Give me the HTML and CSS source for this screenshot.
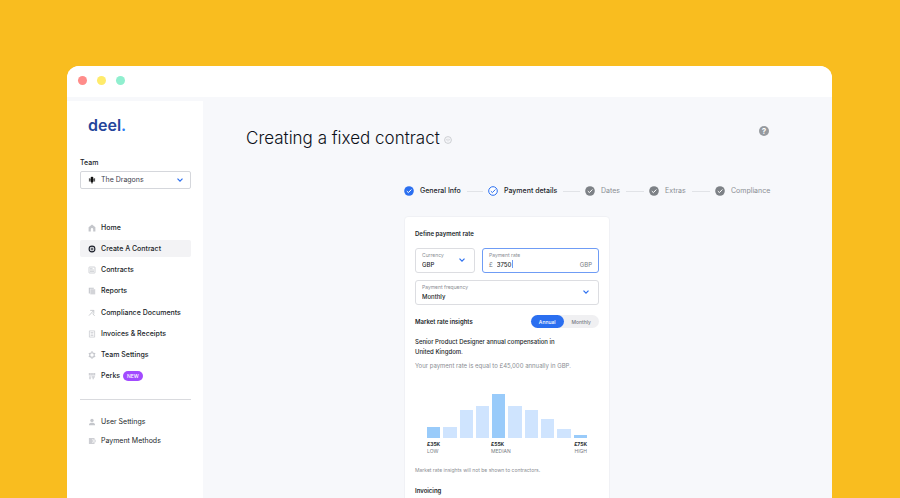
FILE: index.html
```html
<!DOCTYPE html>
<html lang="en">
<head>
<meta charset="utf-8">
<meta name="viewport" content="width=device-width, initial-scale=1">
<title>Deel – Creating a fixed contract</title>
<link rel="stylesheet" href="styles.css">
</head>
<body>
<svg class="sprite" aria-hidden="true">
  <symbol id="chevron" viewBox="0 0 8 8"><path d="M1.5 2.7 4 5.2l2.5-2.5" fill="none" stroke="currentColor" stroke-width="1.2"/></symbol>
  <symbol id="check-solid" viewBox="0 0 10 10"><circle cx="5" cy="5" r="4.8" fill="currentColor"/><path d="m2.8 5.1 1.6 1.5L7.4 3.5" fill="none" stroke="#fff" stroke-width="1"/></symbol>
  <symbol id="check-ring" viewBox="0 0 10 10"><circle cx="5" cy="5" r="4.3" fill="#fff" stroke="currentColor"/><path d="m2.8 5.1 1.6 1.5L7.4 3.5" fill="none" stroke="currentColor" stroke-width="1"/></symbol>
</svg>
<div class="window">
  <header class="titlebar">
    <span class="dot dot-red"></span><span class="dot dot-yellow"></span><span class="dot dot-green"></span>
  </header>
  <div class="app">
    <aside class="sidebar">
      <a class="logo" href="#">deel<span>.</span></a>
      <label class="team-label" for="team">Team</label>
      <div class="team-box">
        <svg class="icon team-icon" viewBox="0 0 8 8"><rect x="2.6" y=".8" width="2.8" height="5.8" rx="1.3"/><path d="M1.4 2.2v3.4M6.6 2.2v3.4M1.4 3.9h5.2M4 6v1.8" fill="none" stroke="currentColor" stroke-width=".7"/></svg>
        <select id="team"><option>The Dragons</option></select>
        <svg class="icon chevron"><use href="#chevron"/></svg>
      </div>
      <nav>
        <ul class="menu">
          <li><a href="#"><svg class="icon" viewBox="0 0 8 8"><path d="M.6 3.2 4 .5l3.4 2.7v4.2H5.2V5.2a1.2 1.2 0 0 0-2.4 0v2.2H.6z"/></svg>Home</a></li>
          <li><a class="active" href="#"><svg class="icon" viewBox="0 0 8 8"><circle cx="4" cy="4" r="2.9" fill="none" stroke="currentColor" stroke-width="1.1"/><path d="M4 2.5v3M2.5 4h3" stroke="currentColor" stroke-width=".8"/></svg>Create A Contract</a></li>
          <li><a href="#"><svg class="icon" viewBox="0 0 8 8"><rect x="1" y="1" width="6" height="6" rx=".5" fill="none" stroke="currentColor" stroke-width=".8"/><path d="M2 2.7h2.6M2 4h4M2 5.4h4" stroke="currentColor" stroke-width=".8"/></svg>Contracts</a></li>
          <li><a href="#"><svg class="icon" viewBox="0 0 8 8"><path d="M.8.8h5v1H1.9v4.7H.8z"/><path d="M2.3 2.2h4.9v5.2H2.3z" opacity=".75"/></svg>Reports</a></li>
          <li><a href="#"><svg class="icon" viewBox="0 0 8 8"><path d="M2.2 1.4h3.6v3.4M5.8 1.4 1 6.6M4.6 4.6l2 2.2" fill="none" stroke="currentColor" stroke-width=".9"/></svg>Compliance Documents</a></li>
          <li><a href="#"><svg class="icon" viewBox="0 0 8 8"><path d="M1.4.9h5.2v6.2H1.4zM2.6 2.5h2.8M2.6 4h2.8M2.6 5.5h2.8" fill="none" stroke="currentColor" stroke-width=".7"/></svg>Invoices &amp; Receipts</a></li>
          <li><a href="#"><svg class="icon" viewBox="0 0 8 8"><circle cx="4" cy="4" r="2.3" fill="none" stroke="currentColor" stroke-width="1.1"/><path d="M4 .3v1.3M4 6.4v1.3M.8 2.2l1.1.6M6.1 5.2l1.1.6M.8 5.8l1.1-.6M6.1 2.8l1.1-.6" stroke="currentColor" stroke-width="1.3"/></svg>Team Settings</a></li>
          <li><a href="#"><svg class="icon" viewBox="0 0 8 8"><path d="M.8 1h6.4v2.4H.8zM1.3 4.2h1.4v3H1.3zM3.6 4.2h3.3v1.2H5.8v1.8H4.6V5.4h-1z" opacity=".85"/><path d="M2.9 1v2.4M5.1 1v2.4" stroke="#fff" stroke-width=".4"/></svg>Perks <span class="badge">NEW</span></a></li>
        </ul>
        <ul class="menu menu-account">
          <li><a href="#"><svg class="icon" viewBox="0 0 8 8"><circle cx="4" cy="2.4" r="1.7"/><path d="M1 7.2V6.4c0-2.2 6-2.2 6 0v.8z"/></svg>User Settings</a></li>
          <li><a href="#"><svg class="icon" viewBox="0 0 8 8"><path d="M.9 1h5.6v1.2H4v3.6h2.5V7H.9z" opacity=".85"/><path d="M4.6 2.9h2.6v2.2H4.6z" fill="none" stroke="currentColor" stroke-width=".7"/></svg>Payment Methods</a></li>
        </ul>
      </nav>
    </aside>
    <main class="main">
      <div class="page-head">
        <h1>Creating a fixed contract</h1>
        <svg class="icon head-mark" viewBox="0 0 8 8"><circle cx="4" cy="4" r="3.4" fill="none" stroke="currentColor" stroke-width=".8"/><path d="M2.6 3.2h2.8v1L4 5.2 2.6 4.2z" fill="none" stroke="currentColor" stroke-width=".5"/></svg>
        <button class="help" type="button" aria-label="Help">?</button>
      </div>
      <div class="wizard">
        <ol class="steps">
          <li class="done"><svg><use href="#check-solid"/></svg>General Info</li>
          <li class="current"><svg><use href="#check-ring"/></svg>Payment details</li>
          <li><svg><use href="#check-solid"/></svg>Dates</li>
          <li><svg><use href="#check-solid"/></svg>Extras</li>
          <li><svg><use href="#check-solid"/></svg>Compliance</li>
        </ol>
        <form class="card">
          <h2>Define payment rate</h2>
          <div class="fields">
            <div class="field">
              <label for="currency">Currency</label>
              <select id="currency"><option>GBP</option></select>
              <svg class="icon chevron"><use href="#chevron"/></svg>
            </div>
            <div class="field field-focus">
              <label for="rate">Payment rate</label>
              <div class="money"><span>£</span><div class="amount"><input id="rate" type="text" value="3750" size="4"><i class="caret"></i></div><span>GBP</span></div>
            </div>
            <div class="field field-wide">
              <label for="frequency">Payment frequency</label>
              <select id="frequency"><option>Monthly</option></select>
              <svg class="icon chevron"><use href="#chevron"/></svg>
            </div>
          </div>
          <div class="insights-head">
            <h2>Market rate insights</h2>
            <div class="toggle"><button class="on" type="button">Annual</button><button type="button">Monthly</button></div>
          </div>
          <p class="lead">Senior Product Designer annual compensation in United Kingdom.</p>
          <p class="muted">Your payment rate is equal to £45,000 annually in GBP.</p>
          <div class="chart">
            <div class="bars">
              <i class="mark" style="height:11px"></i><i style="height:11px"></i><i style="height:28px"></i><i style="height:32px"></i><i class="mark" style="height:44px"></i><i style="height:32px"></i><i style="height:28px"></i><i style="height:19px"></i><i style="height:9px"></i><i class="mark" style="height:3px"></i>
            </div>
            <dl class="legend">
              <div><dt>£35K</dt><dd>LOW</dd></div>
              <div><dt>£55K</dt><dd>MEDIAN</dd></div>
              <div><dt>£75K</dt><dd>HIGH</dd></div>
            </dl>
          </div>
          <p class="note">Market rate insights will not be shown to contractors.</p>
          <h2>Invoicing</h2>
        </form>
      </div>
    </main>
  </div>
</div>
</body>
</html>
```

FILE: styles.css
```css
* { box-sizing: border-box; margin: 0; padding: 0; }

body {
  height: 100vh;
  overflow: hidden;
  padding: 66px 68px 0 67px;
  background: #f9bd1f;
  color: #1b1f2a;
  font: 7px/10px Inter, "Liberation Sans", sans-serif;
}

ul, ol { list-style: none; }
a { color: inherit; text-decoration: none; }
button, input, select { border: 0; background: none; color: inherit; font: inherit; outline: 0; }
select { appearance: none; width: 100%; }
.sprite { position: absolute; width: 0; height: 0; }
.icon { flex: none; width: 8px; height: 8px; fill: currentColor; }
.chevron { color: #2b6ff0; pointer-events: none; }

.window {
  display: flex;
  flex-direction: column;
  min-height: 100%;
  overflow: hidden;
  border-radius: 12px 12px 0 0;
  background: #f7f8fb;
}

.titlebar {
  display: flex;
  gap: 10px;
  padding: 10px 11px 12px;
  background: #fff;
}
.dot { width: 9px; height: 9px; border-radius: 50%; }
.dot-red { background: #ff8c8a; }
.dot-yellow { background: #ffeb6b; }
.dot-green { background: #90efcf; }

.app { display: flex; flex: 1; padding-top: 4px; }

.sidebar {
  flex: none;
  width: 136px;
  padding: 14px 12px 0 13px;
  background: #fff;
}
.logo {
  display: block;
  margin-left: 8px;
  color: #25459b;
  font-size: 16px;
  line-height: 20px;
  font-weight: 600;
}
.logo span { color: #2b7cf5; }
.team-label { display: block; margin-top: 23px; font-weight: 500; }
.team-box {
  display: flex;
  align-items: center;
  gap: 5px;
  height: 18px;
  margin-top: 3px;
  padding: 0 6px 0 7px;
  border: 1px solid #d5d7dc;
  border-radius: 2px;
  color: #3c404c;
}
.team-icon { color: #111; }

.menu {
  display: flex;
  flex-direction: column;
  justify-content: space-between;
  height: 166px;
  margin-top: 30px;
}
.menu a {
  display: flex;
  align-items: center;
  gap: 5px;
  height: 17px;
  padding-left: 8px;
  border-radius: 2px;
  font-weight: 500;
}
.menu .icon { color: #c4c6cb; }
.menu .active { background: #f3f3f5; }
.menu .active .icon { color: #1b1f2a; }
.badge {
  margin-left: -2px;
  padding: 0 4px;
  border-radius: 5px;
  background: #a24bff;
  color: #fff;
  font-size: 5px;
}
.menu-account {
  height: 50px;
  margin-top: 14px;
  padding-top: 13px;
  border-top: 1px solid #d9dade;
}
.menu-account a { font-weight: 400; }

.main { flex: 1; padding: 26px 63px 0 43px; }
.page-head { display: flex; align-items: center; }
h1 { color: #0c1018; font-size: 17px; line-height: 22px; font-weight: 350; }
.head-mark { margin: 4px 0 0 4px; color: #c2c4c8; }
.help {
  width: 10px;
  height: 10px;
  margin: -14px 0 0 auto;
  border-radius: 50%;
  background: #969a9f;
  color: #fff;
  font-size: 8px;
  font-weight: 700;
}

.wizard { width: fit-content; margin: 37px 0 0 auto; }
.steps {
  display: grid;
  grid-template-columns: 84px 97px 64px 66px 54px;
  color: #8a8d93;
}
.steps li { display: flex; align-items: center; gap: 6px; white-space: nowrap; }
.steps svg { flex: none; width: 10px; height: 10px; color: #7d8186; }
.steps li:not(:last-child)::after { content: ""; flex: 1; height: 1px; margin-right: 5px; background: #e1e3e7; }
.steps .done, .steps .current { color: #1b1f2a; font-weight: 500; }
.steps .done svg, .steps .current svg { color: #2b6ff0; }

.card {
  max-width: 206px;
  margin-top: 20px;
  padding: 12px 10px;
  border: 1px solid #f0f1f5;
  border-radius: 4px;
  background: #fff;
}
h2 { font-size: 6px; line-height: 10px; font-weight: 600; }

.fields {
  display: grid;
  grid-template-columns: 60px 1fr;
  gap: 7px;
  margin-top: 9px;
  font-size: 6px;
  line-height: 9px;
}
.field {
  display: grid;
  grid-template-columns: 1fr 8px;
  align-items: center;
  height: 25px;
  padding: 2px 8px 3px 6px;
  border: 1px solid #dcdde1;
  border-radius: 3px;
}
.field label { grid-area: 1 / 1; color: #8a8d93; font-size: 5px; white-space: nowrap; }
.field select { grid-area: 2 / 1; font-weight: 500; }
.field .chevron { grid-area: 1 / 2 / 3 / 3; }
.field-wide { grid-column: 1 / -1; }
.field-focus { grid-template-columns: 1fr; padding-right: 6px; border-color: #6f9cf5; }
.money { display: flex; gap: 4px; color: #777b82; }
.amount { display: flex; flex: 1; color: #1b1f2a; font-weight: 500; }
.amount input { width: 15px; }
.caret { width: 1px; height: 8px; background: #6f9cf5; }

.insights-head { display: flex; align-items: center; justify-content: space-between; margin-top: 10px; }
.toggle { display: flex; border-radius: 7px; background: #f0f0f2; color: #777b82; font-size: 5px; }
.toggle button { height: 13px; padding: 0 8px; border-radius: 7px; font-weight: 500; }
.toggle .on { background: #2b6ff0; color: #fff; }

.lead { max-width: 160px; margin-top: 9px; font-size: 6px; line-height: 10px; font-weight: 500; }
.muted, .note { margin-top: 4px; color: #8a8d93; font-size: 6px; line-height: 10px; }
.note { margin: 10px 0 11px; font-size: 5px; }

.chart { margin: 23px 12px 0; }
.bars { display: flex; align-items: flex-end; gap: 3px; height: 44px; }
.bars i { flex: 1; background: #cfe4fe; }
.bars .mark { background: #99cbfa; }
.legend {
  display: grid;
  grid-template-columns: 2fr 2fr 1fr;
  margin-top: 3px;
  font-size: 5px;
  line-height: 7px;
}
.legend div:last-child { text-align: right; }
.legend dt { font-weight: 700; }
.legend dd { color: #777b82; }
```
